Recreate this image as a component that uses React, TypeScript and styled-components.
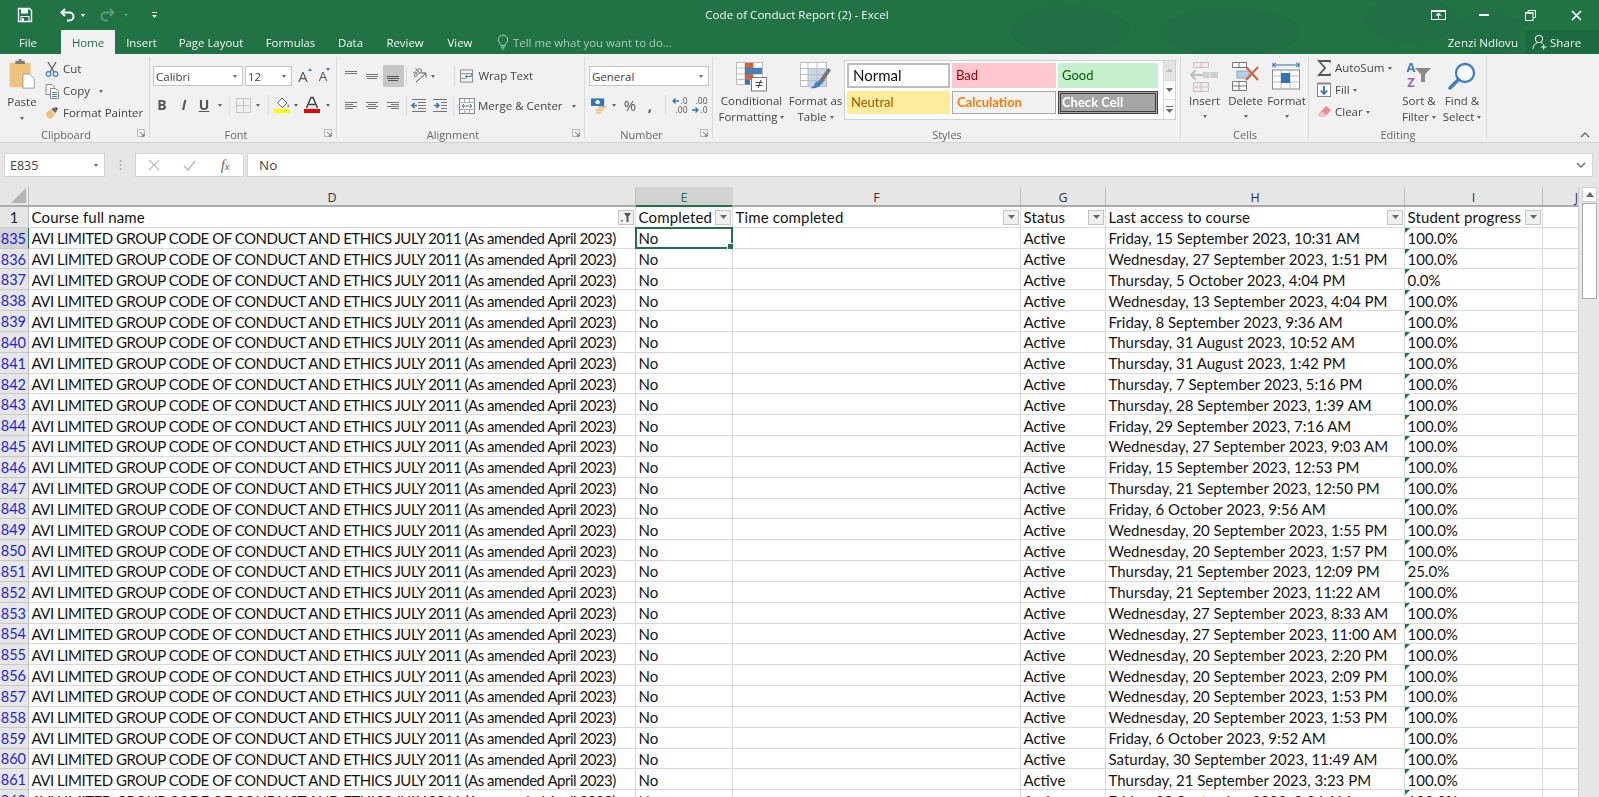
import React from "react";
import styled, { createGlobalStyle } from "styled-components";

const Global = createGlobalStyle`
  html, body { margin: 0; padding: 0; height: 797px; overflow: hidden; background: #e6e6e6; }
  * { box-sizing: border-box; }
`;

const UI = `"Open Sans", "Noto Sans", sans-serif`;
const CELL = `Lato, "Liberation Sans", sans-serif`;

const Page = styled.div`
  width: 1599px; height: 797px; overflow: hidden; display: flex; flex-direction: column;
  font-family: ${UI}; filter: blur(0.35px);
`;
const Header = styled.div`position: relative; background: #217346; flex: none;`;
const HeaderDecor = styled.svg`position: absolute; left: 1000px; top: 0; width: 520px; height: 54px; pointer-events: none;`;
const TitleBar = styled.div`position: relative; height: 30px; display: flex; align-items: center; color: #fff;`;
const QuickSlot = styled.span<{ $w: number; $ml?: number }>`
  display: flex; align-items: center; justify-content: center; width: ${p => p.$w}px; margin-left: ${p => p.$ml ?? 0}px; height: 20px; flex: none;
`;
const QuickCaret = styled.span<{ $dim?: boolean }>`
  width: 0; height: 0; border-left: 2.5px solid transparent; border-right: 2.5px solid transparent;
  border-top: 3px solid ${p => (p.$dim ? "#5b9a78" : "#fff")};
`;
const TitleText = styled.div`
  position: absolute; left: 0; right: 5px; top: 6px; text-align: center; font-size: 11.6px; line-height: 17px; color: #f2f7f4;
`;
const WindowButtons = styled.div`position: relative; margin-left: auto; display: flex; align-items: center; padding-right: 1px;`;

const TabBar = styled.div`height: 24px; display: flex; align-items: stretch; color: #fff; position: relative;`;
const Tab = styled.div<{ $w: number; $active?: boolean; $ml?: number }>`
  width: ${p => p.$w}px; margin-left: ${p => p.$ml ?? 0}px; flex: none; display: flex; align-items: center; justify-content: center;
  font-size: 11.4px; color: ${p => (p.$active ? "#217346" : "#f1f6f3")};
  background: ${p => (p.$active ? "#f1f1f1" : "transparent")};
`;
const TellMe = styled.div`display: flex; align-items: center; gap: 4px; padding-left: 13px; font-size: 11.4px; color: #a6cdb8;`;
const UserName = styled.div`margin-left: auto; display: flex; align-items: center; font-size: 11.6px; padding-right: 8px; color: #f1f6f3;`;
const ShareBlock = styled.div`width: 73px; background: #1c6a3f; display: flex; align-items: center; gap: 3px; padding-left: 6px; font-size: 11.6px; color: #f1f6f3;`;

const Ribbon = styled.div`position: relative; height: 89px; background: #f1f1f1; border-bottom: 1px solid #d2d2d2; display: flex; font-size: 11.5px; color: #444; flex: none;`;
const Group = styled.div<{ $w: number; $pl?: number; $pt?: number; $last?: boolean }>`
  position: relative; width: ${p => p.$w}px; flex: none; padding-left: ${p => p.$pl ?? 0}px; padding-top: ${p => p.$pt ?? 12}px;
  &::after { content: ""; display: ${p => (p.$last ? "none" : "block")}; position: absolute; right: 0; top: 3px; bottom: 4px; width: 1px; background: #dadada; }
`;
const GroupLabel = styled.div<{ $offset?: number }>`
  position: absolute; left: ${p => p.$offset ?? 0}px; right: 0; bottom: 0; text-align: center; font-size: 11px; line-height: 15px; color: #666;
`;
const Launcher = styled.svg`position: absolute; right: 5px; bottom: 5px; width: 8px; height: 8px;`;
const ToolRow = styled.div<{ $mt?: number; $h?: number }>`display: flex; align-items: center; height: ${p => p.$h ?? 22}px; margin-top: ${p => p.$mt ?? 0}px;`;
const Tool = styled.span<{ $w: number; $ml?: number; $active?: boolean }>`
  position: relative; display: flex; align-items: center; justify-content: center; flex: none; height: 22px; width: ${p => p.$w}px; margin-left: ${p => p.$ml ?? 0}px;
  background: ${p => (p.$active ? "#c6c6c6" : "transparent")}; color: #444;
`;
const ToolSep = styled.span<{ $ml?: number }>`flex: none; width: 1px; height: 20px; background: #dcdcdc; margin-left: ${p => p.$ml ?? 0}px;`;
const ToolText = styled.span<{ $ml?: number }>`margin-left: ${p => p.$ml ?? 0}px; padding-bottom: 2px; white-space: nowrap; font-size: 11.5px; color: #444;`;
const Caret = styled.span<{ $ml?: number; $mt?: number }>`
  flex: none; width: 0; height: 0; border-left: 2.5px solid transparent; border-right: 2.5px solid transparent; border-top: 3px solid #666;
  margin-left: ${p => p.$ml ?? 0}px; margin-top: ${p => p.$mt ?? 0}px; display: inline-block; vertical-align: middle;
`;
const FieldBox = styled.div<{ $w: number; $ml?: number }>`
  width: ${p => p.$w}px; margin-left: ${p => p.$ml ?? 0}px; height: 20px; flex: none; background: #fff; border: 1px solid #c6c6c6;
  display: flex; align-items: center; justify-content: space-between; padding: 0 5px 0 2px; font-size: 11.5px; color: #444;
`;
const Letter = styled.span<{ $b?: boolean; $i?: boolean; $u?: boolean; $fs?: number }>`
  font-family: ${UI}; font-size: ${p => p.$fs ?? 14}px; font-weight: ${p => (p.$b ? 700 : 400)}; line-height: 16px;
  font-style: ${p => (p.$i ? "italic" : "normal")}; text-decoration: ${p => (p.$u ? "underline" : "none")}; color: #555;
`;
const GrowArrow = styled.span<{ $down?: boolean }>`
  position: absolute; right: 2px; top: 3px; width: 0; height: 0; border-left: 2.5px solid transparent; border-right: 2.5px solid transparent;
  ${p => (p.$down ? "border-top: 3px solid #3f7fc1;" : "border-bottom: 3px solid #3f7fc1;")}
`;
const Tilted = styled.span`
  position: absolute; left: 4px; top: 2px; font-size: 9px; line-height: 10px; color: #555; transform: rotate(-38deg);
`;
const DecStack = styled.span`display: flex; flex-direction: column; align-items: flex-end; font-size: 8.5px; line-height: 9px; color: #555;`;
const DecLine = styled.span`display: flex; align-items: center; gap: 1px;`;
const SortStack = styled.span`display: flex; flex-direction: column; align-items: center; font-size: 13px; line-height: 15px; font-weight: 700;`;
const SortLetter = styled.span<{ $c: string }>`color: ${p => p.$c};`;
const SortIcon = styled.span`display: flex; align-items: center; gap: 0; margin-top: -3px;`;
const FxMark = styled.span`font-family: "Liberation Serif", serif; font-style: italic; font-size: 15px; color: #666;`;
const FxSub = styled.span`font-size: 11px;`;
const Big = styled.div<{ $w: number; $pt?: number }>`width: ${p => p.$w}px; padding-top: ${p => p.$pt ?? 0}px; flex: none; display: flex; flex-direction: column; align-items: center; text-align: center;`;
const BigIcon = styled.div`height: 33px; display: flex; align-items: center; justify-content: center;`;
const BigLabel = styled.div`font-size: 11.5px; line-height: 16px; color: #444; white-space: nowrap;`;
const BigRow = styled.div`display: flex; align-items: flex-start;`;
const PasteBox = styled.div`width: 36px; flex: none; display: flex; flex-direction: column; align-items: center;`;
const PasteLabel = styled(BigLabel)`margin-top: 4px;`;
const ClipList = styled.div`display: flex; flex-direction: column; margin-left: 5px;`;
const EditList = styled.div`display: flex; flex-direction: column; width: 82px; flex: none;`;
const ClipRow = styled.div`display: flex; align-items: center; height: 22px;`;
const ClipIcon = styled.span`width: 14px; display: flex; justify-content: center; flex: none;`;

const Gallery = styled.div`
  width: 332px; height: 60px; flex: none; background: #fff; border: 1px solid #cfcfcf; display: flex;
`;
const GalleryGrid = styled.div`
  width: 317px; padding: 2px 0 0 2px; display: grid; grid-template-columns: 103px 104px 100px; grid-template-rows: 25px 23px; row-gap: 3px; column-gap: 2px;
`;
const StyleCell = styled.div<{ $bg: string; $fg: string; $bd?: string; $bold?: boolean; $fs?: number; $pl?: number }>`
  background: ${p => p.$bg}; color: ${p => p.$fg}; border: ${p => p.$bd ?? "none"}; font-weight: ${p => (p.$bold ? 700 : 400)};
  font-family: ${CELL}; font-size: ${p => p.$fs ?? 13}px; display: flex; align-items: center; padding: 0 0 2px ${p => p.$pl ?? 4}px; white-space: nowrap;
`;
const GalleryScroll = styled.div`flex: 1; display: flex; flex-direction: column; border-left: 1px solid #d8d8d8; margin-left: 1px;`;
const ScrollCell = styled.div<{ $dim?: boolean }>`
  flex: 1; display: flex; align-items: center; justify-content: center; background: ${p => (p.$dim ? "#e4e4e4" : "#fff")}; border-bottom: 1px solid #d8d8d8;
  &:last-child { border-bottom: none; }
`;
const Collapse = styled.svg`position: absolute; left: 1580px; top: 77px; width: 10px; height: 7px;`;

const FormulaBar = styled.div`height: 44px; background: #e6e6e6; padding: 10px 0 0 4px; display: flex; align-items: flex-start; font-size: 12.5px; color: #444; flex: none;`;
const NameBox = styled.div`width: 101px; height: 24px; background: #fff; border: 1px solid #d4d4d4; display: flex; align-items: center; justify-content: space-between; padding: 0 6px 0 5px;`;
const Dots = styled.div`width: 30px; height: 24px; display: flex; align-items: center; justify-content: center;`;
const FxBox = styled.div`width: 109px; height: 24px; background: #fff; border: 1px solid #d4d4d4; display: flex; align-items: center;`;
const FxItem = styled.span`flex: 1; display: flex; align-items: center; justify-content: center;`;
const FormulaInput = styled.div`
  width: 1346px; height: 24px; margin-left: 3px; background: #fff; border: 1px solid #d4d4d4; display: flex; align-items: center; justify-content: space-between; padding: 0 6px 0 11px;
  font-size: 13.5px;
`;

const SheetWrap = styled.div`flex: 1; display: flex; min-height: 0;`;
const SheetGrid = styled.div`width: 1579px; flex: none; background: #fff; font-family: ${CELL}; color: #141414; overflow: hidden; border-right: 1px solid #d0d0d0;`;
const HeaderRow = styled.div`display: flex; height: 20px; background: #e6e6e6; border-bottom: 2px solid #ababab;`;
const ColHead = styled.div<{ $w: number; $sel?: boolean; $edge?: boolean }>`
  width: ${p => p.$w}px; flex: none; display: flex; align-items: center; justify-content: ${p => (p.$edge ? "flex-end" : "center")};
  font-family: ${UI}; font-size: 12.5px; padding: 2px ${p => (p.$edge ? 1 : 0)}px 0 0;
  background: ${p => (p.$sel ? "#d2d2d2" : "transparent")}; color: ${p => (p.$sel ? "#217346" : "#333")};
  border-right: ${p => (p.$edge ? "none" : `1px solid ${p.$sel ? "#d2d2d2" : "#bdbdbd"}`)}; position: relative;
  ${p => (p.$sel ? "&::after{content:'';position:absolute;left:0;right:0;bottom:-2px;height:2px;background:#217346;}" : "")}
`;
const Corner = styled.div`width: 29px; flex: none; border-right: 1px solid #bdbdbd; display: flex; align-items: flex-end; justify-content: flex-end; padding: 0 2px 2px 0;`;
const Row = styled.div<{ $h: number }>`display: flex; height: ${p => p.$h}px;`;
const RowHead = styled.div<{ $sel?: boolean; $blue?: boolean }>`
  width: 29px; flex: none; background: ${p => (p.$sel ? "#d2d2d2" : "#e6e6e6")}; border-right: 1px solid ${p => (p.$sel ? "#217346" : "#bdbdbd")}; border-bottom: 1px solid #c8c8c8;
  display: flex; align-items: center; justify-content: ${p => (p.$blue ? "flex-end" : "center")}; padding: 1px ${p => (p.$blue ? 2 : 0)}px 0 0;
  font-size: 14.5px; color: ${p => (p.$blue ? "#1f1fe0" : "#222")};
`;
const Cell = styled.div<{ $w: number; $tight?: boolean; $head?: boolean }>`
  position: relative; width: ${p => p.$w}px; flex: none; border-right: 1px solid #d9d9d9; border-bottom: 1px solid #d9d9d9; padding: 1px 0 0 2.5px;
  display: flex; align-items: center; justify-content: space-between; font-size: 15px; white-space: nowrap; overflow: visible;
  letter-spacing: ${p => (p.$tight ? "-0.485px" : p.$head ? "0.15px" : "0")};
`;
const FilterBtn = styled.span`
  flex: none; width: 16px; height: 15px; margin-right: 1px; background: #f0f0f0; border: 1px solid #c4c4c4; display: flex; align-items: center; justify-content: center;
`;
const ErrorMark = styled.span`
  position: absolute; left: 0; top: 0; width: 0; height: 0; border-top: 5px solid #107c41; border-right: 5px solid transparent;
`;
const Selected = styled.span`
  position: absolute; left: -1px; top: -1px; right: -1px; bottom: -1px; border: 2px solid #217346; pointer-events: none; z-index: 2;
  &::after { content: ""; position: absolute; right: -3px; bottom: -3px; width: 5px; height: 5px; background: #217346; border: 1px solid #fff; }
`;
const ScrollTrack = styled.div`flex: 1; padding: 0 2px 0 3px; background: #e6e6e6; display: flex; flex-direction: column; align-items: stretch;`;
const ScrollUp = styled.div`height: 15px; background: #fff; border: 1px solid #d0d0d0; display: flex; align-items: center; justify-content: center;`;
const ScrollThumb = styled.div`height: 96px; background: #fff; border: 1px solid #ababab; margin-top: 1px;`;

const WIDTHS = { D: 607, E: 97, F: 288, G: 85, H: 299, I: 138, J: 36 };
const COURSE = "AVI LIMITED GROUP CODE OF CONDUCT AND ETHICS JULY 2011 (As amended April 2023)";
const DATA: [string, string][] = [
  ["Friday, 15 September 2023, 10:31 AM", "100.0%"],
  ["Wednesday, 27 September 2023, 1:51 PM", "100.0%"],
  ["Thursday, 5 October 2023, 4:04 PM", "0.0%"],
  ["Wednesday, 13 September 2023, 4:04 PM", "100.0%"],
  ["Friday, 8 September 2023, 9:36 AM", "100.0%"],
  ["Thursday, 31 August 2023, 10:52 AM", "100.0%"],
  ["Thursday, 31 August 2023, 1:42 PM", "100.0%"],
  ["Thursday, 7 September 2023, 5:16 PM", "100.0%"],
  ["Thursday, 28 September 2023, 1:39 AM", "100.0%"],
  ["Friday, 29 September 2023, 7:16 AM", "100.0%"],
  ["Wednesday, 27 September 2023, 9:03 AM", "100.0%"],
  ["Friday, 15 September 2023, 12:53 PM", "100.0%"],
  ["Thursday, 21 September 2023, 12:50 PM", "100.0%"],
  ["Friday, 6 October 2023, 9:56 AM", "100.0%"],
  ["Wednesday, 20 September 2023, 1:55 PM", "100.0%"],
  ["Wednesday, 20 September 2023, 1:57 PM", "100.0%"],
  ["Thursday, 21 September 2023, 12:09 PM", "25.0%"],
  ["Thursday, 21 September 2023, 11:22 AM", "100.0%"],
  ["Wednesday, 27 September 2023, 8:33 AM", "100.0%"],
  ["Wednesday, 27 September 2023, 11:00 AM", "100.0%"],
  ["Wednesday, 20 September 2023, 2:20 PM", "100.0%"],
  ["Wednesday, 20 September 2023, 2:09 PM", "100.0%"],
  ["Wednesday, 20 September 2023, 1:53 PM", "100.0%"],
  ["Wednesday, 20 September 2023, 1:53 PM", "100.0%"],
  ["Friday, 6 October 2023, 9:52 AM", "100.0%"],
  ["Saturday, 30 September 2023, 11:49 AM", "100.0%"],
  ["Thursday, 21 September 2023, 3:23 PM", "100.0%"],
  ["Friday, 22 September 2023, 9:34 AM", "100.0%"],
];

const Lines = ({ w = 14, rows, color = "#777" }: { w?: number; rows: [number, number, number][]; color?: string }) => (
  <svg width={w} height={14} viewBox={`0 0 ${w} 14`}>
    {rows.map(([x1, x2, y], i) => <line key={i} x1={x1} x2={x2} y1={y + 0.5} y2={y + 0.5} stroke={color} strokeWidth={1} />)}
  </svg>
);
const LauncherIcon = () => (
  <Launcher viewBox="0 0 8 8"><path d="M.5 4V.5H4M.5.5H7.5V7.5H.5z" fill="none" stroke="#bbb" /><path d="M3 3 L7 7M7 4.5V7H4.5" fill="none" stroke="#777" /></Launcher>
);
const FilterArrow = () => <svg width={7} height={4} viewBox="0 0 7 4"><path d="M0 0h7L3.5 4z" fill="#666" /></svg>;

const App = () => (
  <Page>
    <Global />
    <Header>
      <HeaderDecor viewBox="0 0 520 54">
        <g fill="#206e43">
          <ellipse cx="70" cy="30" rx="60" ry="24" /><ellipse cx="230" cy="32" rx="70" ry="24" /><ellipse cx="410" cy="20" rx="48" ry="22" />
          <ellipse cx="490" cy="34" rx="40" ry="20" />
        </g>
      </HeaderDecor>
      <TitleBar>
        <QuickSlot $w={16} $ml={17}>
          <svg width={16} height={16} viewBox="0 0 16 16"><path d="M1.5 1.5h11l2 2v11h-13z" fill="none" stroke="#fff" strokeWidth="1.4" /><rect x="4" y="2" width="7" height="4.5" fill="#fff" /><rect x="4" y="9.5" width="8" height="5" fill="none" stroke="#fff" /><rect x="5" y="11" width="2" height="3" fill="#fff" /></svg>
        </QuickSlot>
        <QuickSlot $w={18} $ml={26}>
          <svg width={16} height={14} viewBox="0 0 16 14"><path d="M5 1 1.500 4.500 5 8" fill="none" stroke="#fff" strokeWidth="2" /><path d="M2 4.500h7.500a4 4 0 0 1 0 8H7" fill="none" stroke="#fff" strokeWidth="2" /></svg>
        </QuickSlot>
        <QuickSlot $w={6} $ml={3}><QuickCaret /></QuickSlot>
        <QuickSlot $w={18} $ml={12}>
          <svg width={16} height={14} viewBox="0 0 16 14"><path d="M11 1l3.500 3.500L11 8" fill="none" stroke="#5b9a78" strokeWidth="2" /><path d="M14 4.500H6.500a4 4 0 0 0 0 8H9" fill="none" stroke="#5b9a78" strokeWidth="2" /></svg>
        </QuickSlot>
        <QuickSlot $w={6} $ml={7}><QuickCaret $dim /></QuickSlot>
        <QuickSlot $w={8} $ml={21}>
          <svg width={7} height={7} viewBox="0 0 7 7"><path d="M1 0h5v1H1zM1 3h5L3.500 6z" fill="#e7efe9" /></svg>
        </QuickSlot>
        <TitleText>Code of Conduct Report (2) - Excel</TitleText>
        <WindowButtons>
          <QuickSlot $w={46}>
            <svg width={15} height={10} viewBox="0 0 15 10"><rect x=".5" y=".5" width="14" height="9" fill="none" stroke="#fff" /><path d="M.5 1.500h14" stroke="#fff" /><path d="M7.500 9V3.500M5 5.500l2.500-2.500L10 5.500" fill="#fff" stroke="#fff" /></svg>
          </QuickSlot>
          <QuickSlot $w={46}><svg width={10} height={2}><rect width="10" height="2" fill="#fff" /></svg></QuickSlot>
          <QuickSlot $w={46}>
            <svg width={11} height={11} viewBox="0 0 11 11"><path d="M3 2.500V.5h7.500v7H8" fill="none" stroke="#fff" /><rect x=".5" y="2.500" width="7.500" height="8" fill="none" stroke="#fff" /><path d="M0 3h8" stroke="#fff" strokeWidth="1.400" /></svg>
          </QuickSlot>
          <QuickSlot $w={44} $ml={1}>
            <svg width={11} height={11} viewBox="0 0 11 11"><path d="M1 1l9 9M10 1l-9 9" stroke="#fff" strokeWidth="1.600" /></svg>
          </QuickSlot>
        </WindowButtons>
      </TitleBar>

      <TabBar>
        <Tab $w={56}>File</Tab>
        <Tab $w={54} $ml={5} $active>Home</Tab>
        <Tab $w={53}>Insert</Tab>
        <Tab $w={86}>Page Layout</Tab>
        <Tab $w={73}>Formulas</Tab>
        <Tab $w={47}>Data</Tab>
        <Tab $w={62}>Review</Tab>
        <Tab $w={48}>View</Tab>
        <TellMe>
          <svg width={12} height={16} viewBox="0 0 12 16"><path d="M6 1a4.700 4.700 0 0 0-3 8.300c.6.6.8 1.200.8 2.200h4.400c0-1 .2-1.600.8-2.200A4.700 4.700 0 0 0 6 1zM4 13.200h4M4.600 15h2.800" fill="none" stroke="#a6cdb8" /></svg>
          Tell me what you want to do...
        </TellMe>
        <UserName>Zenzi Ndlovu</UserName>
        <ShareBlock>
          <svg width={15} height={16} viewBox="0 0 15 16"><circle cx="7" cy="5" r="3.700" fill="none" stroke="#fff" /><path d="M1 15c0-3.500 2.200-5.500 4.500-6.300M9 8.500c.7.3 1.300.6 1.800 1.100M9 13h5.500M11.700 10.300v5.400" fill="none" stroke="#fff" /></svg>
          Share
        </ShareBlock>
      </TabBar>
    </Header>

    <Ribbon>
      <Group $w={150} $pt={4} $pl={4}>
        <BigRow>
          <PasteBox>
            <svg width={28} height={32} viewBox="0 0 28 34">
              <rect x="1" y="5" width="22" height="26" rx="1.500" fill="#eec47c" />
              <path d="M7 5V3h3.500V1h3v2H17v3.500H7z" fill="#7d7d7d" />
              <path d="M15 17h7l5 5v10H15z" fill="#fff" stroke="#9a9a9a" />
            </svg>
            <PasteLabel>Paste</PasteLabel>
            <Caret $mt={7} />
          </PasteBox>
          <ClipList>
            <ClipRow>
              <ClipIcon>
                <svg width={14} height={16} viewBox="0 0 14 16"><path d="M3 1l6 10M11 1L5 11" stroke="#666" strokeWidth="1.400" fill="none" /><circle cx="3.500" cy="13" r="2.300" fill="none" stroke="#3f7fc1" strokeWidth="1.200" /><circle cx="10.500" cy="13" r="2.300" fill="none" stroke="#3f7fc1" strokeWidth="1.200" /></svg>
              </ClipIcon>
              <ToolText $ml={4}>Cut</ToolText>
            </ClipRow>
            <ClipRow>
              <ClipIcon>
                <svg width={14} height={15} viewBox="0 0 14 15"><path d="M1 .5h6l2 2V5M1 .5v10h4" fill="#fff" stroke="#888" /><path d="M5.500 4.500h5l3 3v7h-8z" fill="#fff" stroke="#888" /><path d="M7 8.500h5M7 10.500h5M7 12.500h5" stroke="#3f7fc1" /></svg>
              </ClipIcon>
              <ToolText $ml={4}>Copy</ToolText>
              <Caret $ml={9} />
            </ClipRow>
            <ClipRow>
              <ClipIcon>
                <svg width={15} height={14} viewBox="0 0 15 14"><path d="M1 7l5-4 5 5-4 5c-2 .6-4-.4-5-2.500C1.500 10 1.200 8.500 1 7z" fill="#eec47c" /><path d="M7 3l2-2 4 4-2 2z" fill="#666" /><path d="M10 2l2-1.500L14 3l-2 1z" fill="#444" /></svg>
              </ClipIcon>
              <ToolText $ml={4}>Format Painter</ToolText>
            </ClipRow>
          </ClipList>
        </BigRow>
        <GroupLabel $offset={-18}>Clipboard</GroupLabel>
        <LauncherIcon />
      </Group>

      <Group $w={187} $pl={3}>
        <ToolRow $h={20}>
          <FieldBox $w={90}>Calibri<Caret /></FieldBox>
          <FieldBox $w={47} $ml={2}>12<Caret /></FieldBox>
          <Tool $w={22}><Letter $fs={15}>A</Letter><GrowArrow /></Tool>
          <Tool $w={18}><Letter $fs={13.5}>A</Letter><GrowArrow $down /></Tool>
        </ToolRow>
        <ToolRow $mt={8}>
          <Tool $w={18}><Letter $b>B</Letter></Tool>
          <Tool $w={26}><Letter $i $b>I</Letter></Tool>
          <Tool $w={14}><Letter $u $b>U</Letter></Tool>
          <Tool $w={18}><Caret /></Tool>
          <ToolSep />
          <Tool $w={24} $ml={1}>
            <svg width={15} height={15} viewBox="0 0 15 15"><path d="M.5.500h14v14H.5zM7.500.5v14M.5 7.500h14" fill="none" stroke="#c6c6c6" /></svg>
          </Tool>
          <Tool $w={6}><Caret /></Tool>
          <ToolSep $ml={7} />
          <Tool $w={18} $ml={4}>
            <svg width={17} height={18} viewBox="0 0 17 18"><path d="M8 2l5 5-4.500 4.500L3.500 7z" fill="#fff" stroke="#666" /><path d="M14 7.500c1 2 1.200 3.500.4 3.800-.9.300-1-1.500-.4-3.800z" fill="#3f7fc1" /><rect y="13" width="16" height="4" fill="#ffff00" /></svg>
          </Tool>
          <Tool $w={6} $ml={2}><Caret /></Tool>
          <Tool $w={16} $ml={5}>
            <svg width={16} height={18} viewBox="0 0 16 18"><path d="M2.500 12L7 1.500h2L13.500 12M4.500 8.500h7" fill="none" stroke="#444" strokeWidth="1.500" /><rect y="13" width="16" height="4" fill="#ee0000" /></svg>
          </Tool>
          <Tool $w={6} $ml={5}><Caret /></Tool>
        </ToolRow>
        <GroupLabel $offset={-15}>Font</GroupLabel>
        <LauncherIcon />
      </Group>

      <Group $w={248} $pl={3.5} $pt={11}>
        <ToolRow>
          <Tool $w={21}><Lines rows={[[1, 13, 2], [1, 13, 4]]} /></Tool>
          <Tool $w={21}><Lines rows={[[1, 13, 5], [1, 13, 7], [2, 12, 9]]} /></Tool>
          <Tool $w={21} $active><Lines rows={[[1, 13, 7], [1, 13, 9], [2, 12, 11]]} color="#555" /></Tool>
          <ToolSep $ml={2.5} />
          <Tool $w={22} $ml={0.5}>
            <Tilted>ab</Tilted>
            <svg width={16} height={14} viewBox="0 0 16 14"><path d="M5 13 14 5M10.500 4H15v4.500" fill="none" stroke="#555" /></svg>
          </Tool>
          <Tool $w={6}><Caret /></Tool>
          <ToolSep $ml={18} />
          <Tool $w={14} $ml={5}>
            <svg width={15} height={15} viewBox="0 0 15 15"><rect x=".5" y=".5" width="13" height="13" fill="none" stroke="#888" /><path d="M.5 4.500h13M.5 9.500h6" stroke="#888" /><path d="M6 7.500h5.500a1.500 1.500 0 0 0 0-3" fill="none" stroke="#3f7fc1" strokeWidth="1.300" /><path d="M8 5.500 6 7.500l2 2" fill="none" stroke="#3f7fc1" /></svg>
          </Tool>
          <ToolText $ml={5}>Wrap Text</ToolText>
        </ToolRow>
        <ToolRow $mt={8}>
          <Tool $w={21}><Lines rows={[[1, 13, 3], [1, 9, 5], [1, 13, 7], [1, 9, 9]]} /></Tool>
          <Tool $w={21}><Lines rows={[[1, 13, 3], [3, 11, 5], [1, 13, 7], [3, 11, 9]]} /></Tool>
          <Tool $w={21}><Lines rows={[[1, 13, 3], [5, 13, 5], [1, 13, 7], [5, 13, 9]]} /></Tool>
          <ToolSep $ml={2.5} />
          <Tool $w={22} $ml={0.5}>
            <svg width={15} height={14} viewBox="0 0 15 14"><path d="M1 .5h14M7 3.500h8M7 6.500h8M7 9.500h8M1 12.500h14" stroke="#777" /><path d="M6 6.500H1M3.500 4 1 6.500 3.500 9" fill="none" stroke="#2f74b8" strokeWidth="1.500" /></svg>
          </Tool>
          <Tool $w={22}>
            <svg width={15} height={14} viewBox="0 0 15 14"><path d="M0 .5h14M8 3.500h6M8 6.500h6M8 9.500h6M0 12.500h14" stroke="#777" /><path d="M1 6.500h5M3.500 4 6 6.500 3.500 9" fill="none" stroke="#2f74b8" strokeWidth="1.500" /></svg>
          </Tool>
          <ToolSep $ml={1.5} />
          <Tool $w={16} $ml={5}>
            <svg width={16} height={16} viewBox="0 0 16 16"><rect x=".5" y=".5" width="15" height="15" fill="#fff" stroke="#888" /><path d="M.5 4.500h15M.5 11.500h15M5.500.5v4M10.500.5v4M5.500 11.500v4M10.500 11.500v4" stroke="#aaa" /><path d="M3 8h10M5 6 3 8l2 2M11 6l2 2-2 2" fill="none" stroke="#3f7fc1" /></svg>
          </Tool>
          <ToolText $ml={3}>Merge &amp; Center</ToolText>
          <Caret $ml={9} />
        </ToolRow>
        <GroupLabel $offset={-16}>Alignment</GroupLabel>
        <LauncherIcon />
      </Group>

      <Group $w={128} $pl={4}>
        <ToolRow $h={20}>
          <FieldBox $w={120}>General<Caret /></FieldBox>
        </ToolRow>
        <ToolRow $mt={8}>
          <Tool $w={16} $ml={2}>
            <svg width={17} height={17} viewBox="0 0 17 17"><rect x="0" y="1" width="14" height="8" fill="#2f74b8" /><circle cx="7" cy="5" r="2.300" fill="#fff" /><rect x="8" y="9" width="8" height="2.500" fill="#e9b872" /><rect x="5" y="12" width="8" height="2.500" fill="#e9c792" /><rect x="5" y="15" width="6" height="2" fill="#e9c792" /></svg>
          </Tool>
          <Tool $w={6} $ml={4}><Caret /></Tool>
          <Tool $w={16} $ml={5}><Letter $fs={15}>%</Letter></Tool>
          <Tool $w={12} $ml={6}><Letter $b $fs={15}>,</Letter></Tool>
          <ToolSep $ml={9} />
          <Tool $w={18} $ml={5}>
            <DecStack>
              <DecLine><svg width={7} height={6} viewBox="0 0 7 6"><path d="M1 3h6M3.500 .5 1 3l2.500 2.500" fill="none" stroke="#2f74b8" strokeWidth="1.300" /></svg>.0</DecLine>
              <DecLine>.00</DecLine>
            </DecStack>
          </Tool>
          <Tool $w={18} $ml={2}>
            <DecStack>
              <DecLine>.00</DecLine>
              <DecLine><svg width={7} height={6} viewBox="0 0 7 6"><path d="M0 3h6M3.500 .5 6 3 3.500 5.500" fill="none" stroke="#2f74b8" strokeWidth="1.300" /></svg>.0</DecLine>
            </DecStack>
          </Tool>
        </ToolRow>
        <GroupLabel $offset={-15}>Number</GroupLabel>
        <LauncherIcon />
      </Group>

      <Group $w={468} $pl={3} $pt={6}>
        <BigRow>
          <Big $w={71}>
            <BigIcon>
              <svg width={31} height={30} viewBox="0 0 31 30">
                <path d="M.5.500h26v22H.5zM.5 6h26M.5 12h26M.5 17.500h26M9 .5v22M18 .5v22" fill="#fff" stroke="#bbb" />
                <rect x="9" y="1" width="8" height="5" fill="#d2603c" /><rect x="9" y="6" width="17" height="6" fill="#2f74b8" opacity=".9" /><rect x="9" y="12" width="8" height="5.500" fill="#d2603c" /><rect x="9" y="17.500" width="5" height="5" fill="#2f74b8" />
                <rect x="15.500" y="15.500" width="15" height="13.500" fill="#fff" stroke="#777" /><path d="M19.500 20.500h7M19.500 23.500h7M25 18l-3 8" stroke="#444" />
              </svg>
            </BigIcon>
            <BigLabel>Conditional</BigLabel>
            <BigLabel>Formatting <Caret /></BigLabel>
          </Big>
          <Big $w={57}>
            <BigIcon>
              <svg width={31} height={30} viewBox="0 0 31 30">
                <path d="M.5.500h26v24H.5z" fill="#fff" stroke="#bbb" /><rect x="8" y="7" width="18" height="17" fill="#c5d7eb" />
                <path d="M.5 6.500h26M.5 12.500h26M.5 18.500h26M8 .5v24M17 .5v24" stroke="#bbb" fill="none" />
                <path d="M18 20 28 6l3 2-9 14z" fill="#777" /><path d="M22 20c-1 5-6 7-12 6 3-1 4-2 5-5 2-2 5-2 7-1z" fill="#3f7fc1" />
              </svg>
            </BigIcon>
            <BigLabel>Format as</BigLabel>
            <BigLabel>Table <Caret /></BigLabel>
          </Big>
          <Gallery>
            <GalleryGrid>
              <StyleCell $bg="#fff" $fg="#111" $bd="2px solid #bdbdbd" $fs={15}>Normal</StyleCell>
              <StyleCell $bg="#ffc7ce" $fg="#9c0006">Bad</StyleCell>
              <StyleCell $bg="#c6efce" $fg="#006100">Good</StyleCell>
              <StyleCell $bg="#ffeb9c" $fg="#9c5700">Neutral</StyleCell>
              <StyleCell $bg="#f2f2f2" $fg="#fa7d00" $bd="1.500px solid #a8a8a8" $bold>Calculation</StyleCell>
              <StyleCell $bg="#a5a5a5" $fg="#fff" $bd="3px double #3f3f3f" $bold $pl={1}>Check Cell</StyleCell>
            </GalleryGrid>
            <GalleryScroll>
              <ScrollCell $dim><svg width={7} height={4}><path d="M0 4h7L3.500 0z" fill="#bbb" /></svg></ScrollCell>
              <ScrollCell><FilterArrow /></ScrollCell>
              <ScrollCell><svg width={7} height={7} viewBox="0 0 7 7"><path d="M0 0h7v1H0zM0 3h7L3.500 7z" fill="#666" /></svg></ScrollCell>
            </GalleryScroll>
          </Gallery>
        </BigRow>
        <GroupLabel $offset={0}>Styles</GroupLabel>
      </Group>

      <Group $w={128} $pl={3} $pt={6}>
        <BigRow>
          <Big $w={41}>
            <BigIcon>
              <svg width={29} height={30} viewBox="0 0 29 30">
                <path d="M3.500.500h15v5h-15zM11 .5v5M3.500 20.500h15v9h-15zM3.500 25h15M11 20.500v9" fill="#f4e9ee" stroke="#c9c0c5" />
                <rect x="13" y="10" width="15" height="6" fill="#cfcfcf" /><path d="M20 10v6" stroke="#e8e8e8" />
                <path d="M13 13H1M5.500 8.500 1 13l4.500 4.500" fill="none" stroke="#bdbdbd" strokeWidth="2" />
              </svg>
            </BigIcon>
            <BigLabel>Insert</BigLabel>
            <Caret $mt={6} />
          </Big>
          <Big $w={41}>
            <BigIcon>
              <svg width={29} height={30} viewBox="0 0 29 30">
                <path d="M1.500.500h14v5h-14zM8 .5v5M1.500 19.500h14v9h-14zM1.500 24h14M8 19.500v9" fill="#fff" stroke="#777" />
                <rect x="6" y="9" width="12" height="7" fill="#b6cfe6" stroke="#8aa9c6" />
                <path d="M15 5l12 13M27 5 15 18" stroke="#d2603c" strokeWidth="2" />
              </svg>
            </BigIcon>
            <BigLabel>Delete</BigLabel>
            <Caret $mt={6} />
          </Big>
          <Big $w={41}>
            <BigIcon>
              <svg width={29} height={30} viewBox="0 0 29 30">
                <path d="M1 3h26M1 .5v5M27 .5v5M4 1 1 3l3 2M24 1l3 2-3 2" fill="none" stroke="#2f74b8" />
                <rect x=".5" y="8" width="27" height="19" fill="#fff" stroke="#888" /><path d="M.5 14h27M.5 20h27M9 8v19M18 8v19" stroke="#bbb" />
                <rect x="9" y="11" width="9" height="10" fill="#2f74b8" />
              </svg>
            </BigIcon>
            <BigLabel>Format</BigLabel>
            <Caret $mt={6} />
          </Big>
        </BigRow>
        <GroupLabel $offset={0}>Cells</GroupLabel>
      </Group>

      <Group $w={178} $pl={8} $pt={3}>
        <BigRow>
          <EditList>
            <ClipRow>
              <svg width={15} height={16} viewBox="0 0 15 16"><path d="M13 2.500V1H2l6 7-6 7h11v-1.500" fill="none" stroke="#555" strokeWidth="1.800" /></svg>
              <ToolText $ml={3}>AutoSum</ToolText><Caret $ml={4} />
            </ClipRow>
            <ClipRow>
              <svg width={15} height={16} viewBox="0 0 15 16"><rect x=".5" y="1.500" width="13" height="13" fill="#fff" stroke="#888" /><path d="M.5 1.500h13" stroke="#888" strokeWidth="2" /><path d="M7 4v7.500M3.800 8.500 7 12l3.200-3.500" fill="none" stroke="#2f74b8" strokeWidth="1.800" /></svg>
              <ToolText $ml={3}>Fill</ToolText><Caret $ml={3} />
            </ClipRow>
            <ClipRow>
              <svg width={15} height={15} viewBox="0 0 15 15"><path d="M9 1l5 4-6 7H4L1 9.500z" fill="#e98a9b" /><path d="M1 9.500 4 12h4l1.500-2L5 6.500z" fill="#f5c2cb" /></svg>
              <ToolText $ml={3}>Clear</ToolText><Caret $ml={3} />
            </ClipRow>
          </EditList>
          <Big $w={40} $pt={3}>
            <BigIcon>
              <SortIcon>
                <SortStack><SortLetter $c="#3f7fc1">A</SortLetter><SortLetter $c="#9467bd">Z</SortLetter></SortStack>
                <svg width={16} height={16} viewBox="0 0 16 16"><path d="M0 1h16l-6 6.500V15H6V7.500z" fill="#8a8a8a" /></svg>
              </SortIcon>
            </BigIcon>
            <BigLabel>Sort &amp;</BigLabel>
            <BigLabel>Filter <Caret /></BigLabel>
          </Big>
          <Big $w={46} $pt={3}>
            <BigIcon>
              <svg width={30} height={30} viewBox="0 0 30 30">
                <circle cx="18" cy="11" r="9" fill="#fff" stroke="#3f7fc1" strokeWidth="2.300" />
                <path d="M11.500 17.500 3 26" stroke="#3f7fc1" strokeWidth="3.500" strokeLinecap="round" />
              </svg>
            </BigIcon>
            <BigLabel>Find &amp;</BigLabel>
            <BigLabel>Select <Caret /></BigLabel>
          </Big>
        </BigRow>
        <GroupLabel $offset={0}>Editing</GroupLabel>
      </Group>

      <Collapse viewBox="0 0 10 7"><path d="M1 6l4-4 4 4" fill="none" stroke="#666" strokeWidth="1.300" /></Collapse>
    </Ribbon>

    <FormulaBar>
      <NameBox>E835<Caret /></NameBox>
      <Dots><svg width={3} height={12}><circle cx="1.500" cy="2" r="1" fill="#aaa" /><circle cx="1.500" cy="6" r="1" fill="#aaa" /><circle cx="1.500" cy="10" r="1" fill="#aaa" /></svg></Dots>
      <FxBox>
        <FxItem><svg width={12} height={12} viewBox="0 0 12 12"><path d="M1 1l10 10M11 1 1 11" stroke="#bdbdbd" strokeWidth="1.300" /></svg></FxItem>
        <FxItem><svg width={13} height={11} viewBox="0 0 13 11"><path d="M1 6l4 4 7-9" fill="none" stroke="#bdbdbd" strokeWidth="1.500" /></svg></FxItem>
        <FxItem><FxMark>f<FxSub>x</FxSub></FxMark></FxItem>
      </FxBox>
      <FormulaInput>No<svg width={10} height={7} viewBox="0 0 10 7"><path d="M1 1l4 4 4-4" fill="none" stroke="#666" strokeWidth="1.300" /></svg></FormulaInput>
    </FormulaBar>

    <SheetWrap>
      <SheetGrid>
        <HeaderRow>
          <Corner><svg width={15} height={15}><path d="M15 0v15H0z" fill="#b5b5b5" /></svg></Corner>
          <ColHead $w={WIDTHS.D}>D</ColHead>
          <ColHead $w={WIDTHS.E} $sel>E</ColHead>
          <ColHead $w={WIDTHS.F}>F</ColHead>
          <ColHead $w={WIDTHS.G}>G</ColHead>
          <ColHead $w={WIDTHS.H}>H</ColHead>
          <ColHead $w={WIDTHS.I}>I</ColHead>
          <ColHead $w={WIDTHS.J} $edge>J</ColHead>
        </HeaderRow>
        <Row $h={20.8}>
          <RowHead>1</RowHead>
          <Cell $w={WIDTHS.D} $head>Course full name<FilterBtn><svg width={10} height={9} viewBox="0 0 10 9"><path d="M3 0h7L7.500 3.500V9H5.500V3.500z" fill="#555" /><path d="M0 7h1.500v1.500H0z" fill="#555" /></svg></FilterBtn></Cell>
          <Cell $w={WIDTHS.E} $head>Completed<FilterBtn><FilterArrow /></FilterBtn></Cell>
          <Cell $w={WIDTHS.F} $head>Time completed<FilterBtn><FilterArrow /></FilterBtn></Cell>
          <Cell $w={WIDTHS.G} $head>Status<FilterBtn><FilterArrow /></FilterBtn></Cell>
          <Cell $w={WIDTHS.H} $head>Last access to course<FilterBtn><FilterArrow /></FilterBtn></Cell>
          <Cell $w={WIDTHS.I} $head>Student progress<FilterBtn><FilterArrow /></FilterBtn></Cell>
          <Cell $w={WIDTHS.J} />
        </Row>
        {DATA.map(([last, pct], i) => (
          <Row key={i} $h={20.83}>
            <RowHead $blue $sel={i === 0}>{835 + i}</RowHead>
            <Cell $w={WIDTHS.D} $tight>{COURSE}</Cell>
            <Cell $w={WIDTHS.E}>No{i === 0 && <Selected />}</Cell>
            <Cell $w={WIDTHS.F} />
            <Cell $w={WIDTHS.G}>Active</Cell>
            <Cell $w={WIDTHS.H}>{last}</Cell>
            <Cell $w={WIDTHS.I}><ErrorMark />{pct}</Cell>
            <Cell $w={WIDTHS.J} />
          </Row>
        ))}
      </SheetGrid>
      <ScrollTrack>
        <ScrollUp><svg width={8} height={5}><path d="M0 5h8L4 0z" fill="#666" /></svg></ScrollUp>
        <ScrollThumb />
      </ScrollTrack>
    </SheetWrap>
  </Page>
);

export default App;
